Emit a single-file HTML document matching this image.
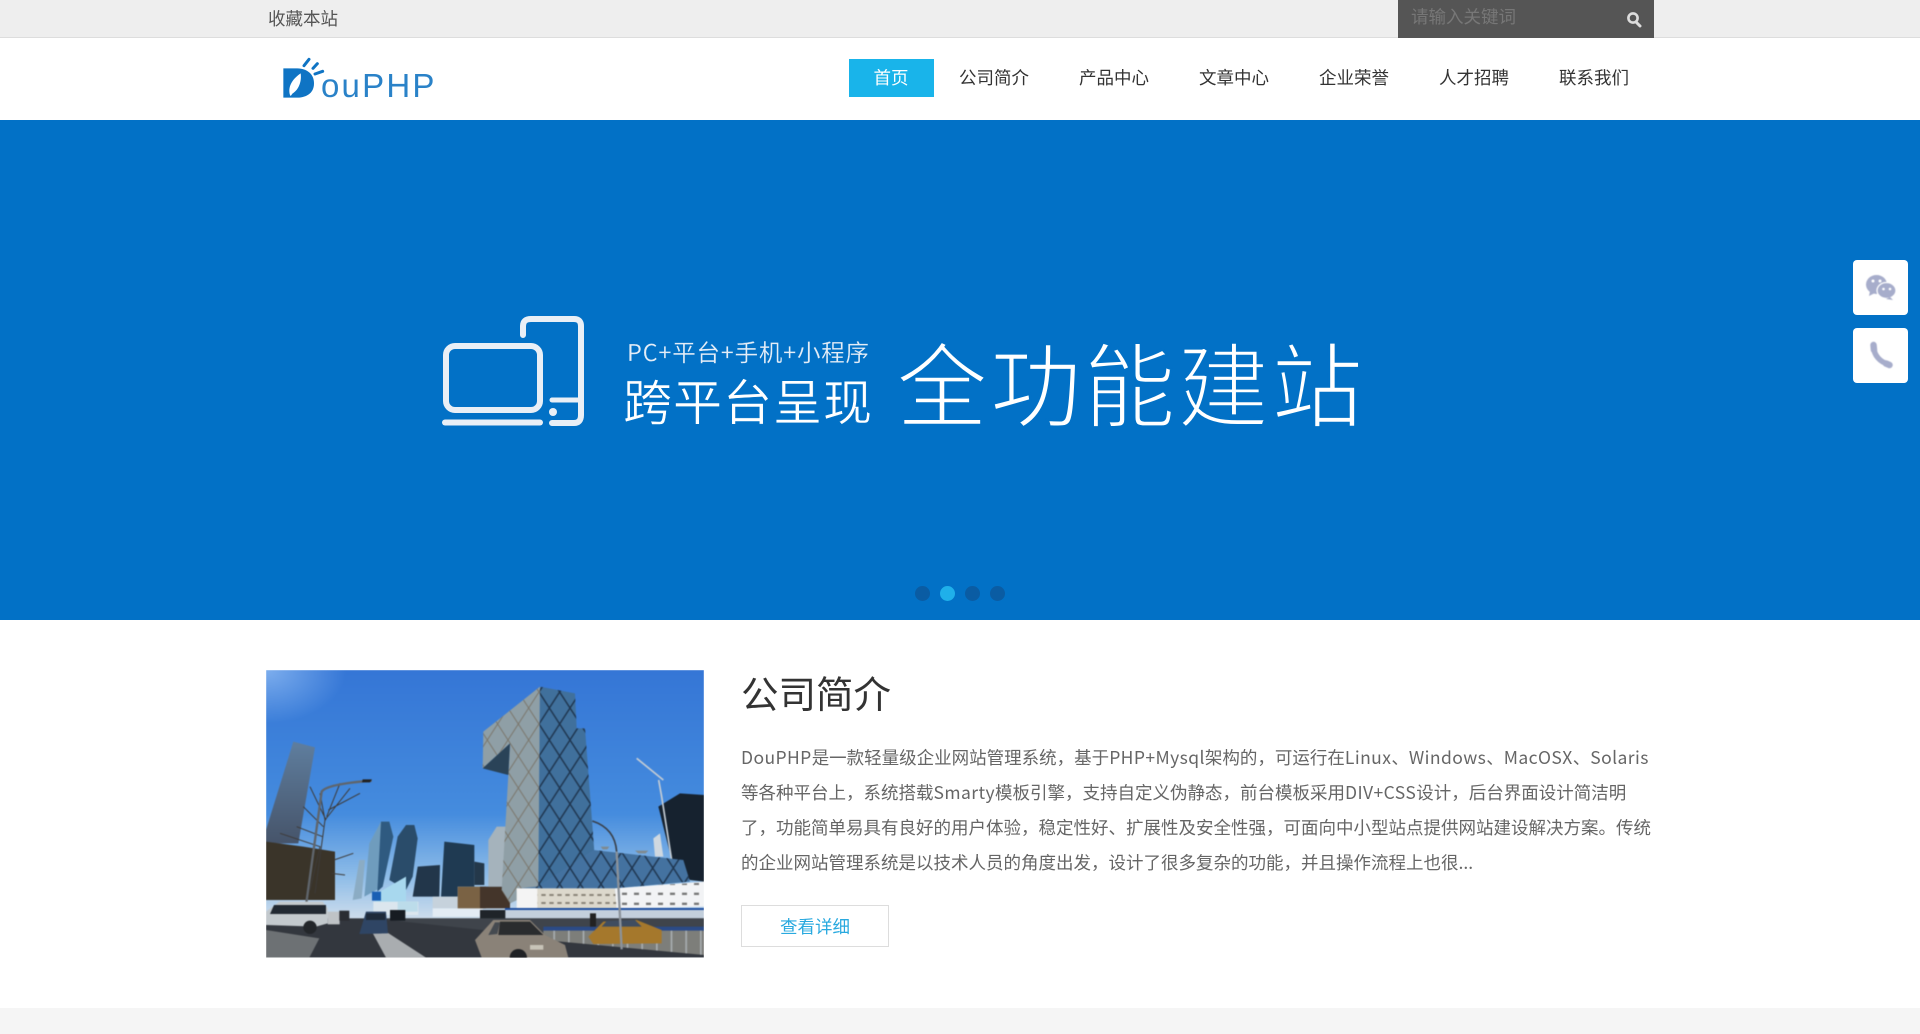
<!DOCTYPE html>
<html lang="zh-CN"><head><meta charset="utf-8"><title>DouPHP</title>
<style>
html,body{margin:0;padding:0;width:1920px;height:1034px;overflow:hidden;background:#fff;font-family:"Noto Sans CJK SC","Liberation Sans",sans-serif}
.a{position:absolute;white-space:nowrap}
#top{left:0;top:0;width:1920px;height:37px;background:#eee;border-bottom:1px solid #ddd}
.nav{top:59px;height:38px;line-height:38px;font-size:17.5px;color:#333;text-align:center;width:120px}
.l{left:741px;font-size:17.5px;line-height:35px;height:35px;color:#666}
.l b{font-weight:400;letter-spacing:.42px}
</style></head><body>
<div class="a" id="top"></div>
<div class="a" style="left:268px;top:0;line-height:37px;font-size:17.5px;color:#555">收藏本站</div>
<div class="a" style="left:1398px;top:0;width:256px;height:38px;background:#555"></div>
<div class="a" style="left:1411px;top:0;line-height:34px;font-size:17.5px;color:#777">请输入关键词</div>
<svg class="a" style="left:1626px;top:10px" width="16" height="18" viewBox="0 0 16 18"><circle cx="7" cy="8" r="4.6" fill="none" stroke="#ddd" stroke-width="2.6"/><path d="M10 12l4 4" stroke="#ddd" stroke-width="3" stroke-linecap="round"/></svg>

<svg class="a" style="left:240px;top:40px" width="220" height="70" viewBox="0 120 660 210">
<path fill="#0f74c4" d="M130 205H172C204 206 222 224 222 250C222 276 204 292 172 293H130Z"/>
<path fill="#fff" d="M150 285C143 262 155 238 182 220C186 250 172 272 158 280L152 288Z"/>
<path stroke="#0f74c4" stroke-width="9" stroke-linecap="round" d="M192 197L207 178M219 205L232 191M225 222L248 214"/>
</svg>
<div class="a" style="left:321px;top:66px;font-family:'Liberation Sans',sans-serif;font-size:33px;line-height:40px;letter-spacing:2.2px;color:#2a82c8">ouPHP</div>

<div class="a" style="left:849px;top:59px;width:85px;height:38px;background:#19b4ea"></div>
<div class="a nav" style="left:831px;color:#fff">首页</div>
<div class="a nav" style="left:934px">公司简介</div>
<div class="a nav" style="left:1054px">产品中心</div>
<div class="a nav" style="left:1174px">文章中心</div>
<div class="a nav" style="left:1294px">企业荣誉</div>
<div class="a nav" style="left:1414px">人才招聘</div>
<div class="a nav" style="left:1534px">联系我们</div>

<div class="a" style="left:0;top:120px;width:1920px;height:500px;background:#0271c6"></div>
<svg class="a" style="left:0;top:120px" width="1920" height="500" viewBox="0 120 1920 500">
<g fill="none" stroke="#e9eff6" stroke-width="6" stroke-linecap="round" stroke-linejoin="round">
<rect x="446" y="346" width="94" height="64" rx="9"/>
<path d="M445 422.500H540" stroke-width="6"/>
<path d="M523 335V326Q523 319 531 319H574Q581 319 581 326V415Q581 423 574 423H552"/>
<path d="M552 400H580" stroke-width="5"/>
</g>
<circle cx="553" cy="412" r="4" fill="#e9eff6"/>
<g font-family="'Noto Sans CJK SC',sans-serif" fill="#fff" stroke="#0271c6">
<text x="627" y="361" font-size="23.500" fill="#e4edf7" stroke-width=".15" textLength="242" lengthAdjust="spacing">PC+平台+手机+小程序</text>
<text x="623" y="420" font-size="49" stroke-width=".5" textLength="249" lengthAdjust="spacing">跨平台呈现</text>
<text x="896" y="420" font-size="92" stroke-width="2.600" textLength="467" lengthAdjust="spacing">全功能建站</text>
</g>
<g fill="#0a5ca3"><circle cx="922.500" cy="593.500" r="7.500"/><circle cx="972.500" cy="593.500" r="7.500"/><circle cx="997.500" cy="593.500" r="7.500"/></g>
<circle cx="947.500" cy="593.500" r="7.500" fill="#1fb0ea"/>
</svg>

<div class="a" style="left:1853px;top:260px;width:55px;height:55px;background:#fff;border-radius:4px"></div>
<div class="a" style="left:1853px;top:328px;width:55px;height:55px;background:#fff;border-radius:4px"></div>
<svg class="a" style="left:1853px;top:260px" width="55" height="123" viewBox="0 0 55 123">
<g style="filter:blur(.4px)">
<ellipse cx="23.500" cy="24.500" rx="10.500" ry="9.500" fill="#a7adcb"/><path d="M17 31l-1 5 6-3z" fill="#a7adcb"/>
<ellipse cx="33.500" cy="30.500" rx="9.500" ry="8" fill="#a7adcb" stroke="#fff" stroke-width="1.300"/><path d="M37 37l3 3-7-1z" fill="#a7adcb"/>
<g fill="#fff"><circle cx="20" cy="21" r="1.500"/><circle cx="27" cy="21" r="1.500"/><circle cx="30.500" cy="29" r="1.300"/><circle cx="37" cy="29" r="1.300"/></g>
<path fill="none" stroke="#a7adcb" stroke-width="5.500" stroke-linecap="round" d="M21 88C21 95 27 102 35 104"/>
<path fill="none" stroke="#a7adcb" stroke-width="6.500" stroke-linecap="round" d="M20.500 85L21 90M33 103.500L36.500 105"/>
</g>
</svg>

<svg class="a" style="left:260px;top:660px" width="450" height="300" viewBox="0 0 1350 900">
<defs>
<linearGradient id="s" x1="0" y1="0" x2="0" y2="1"><stop offset="0" stop-color="#3576d6"/><stop offset=".5" stop-color="#458cde"/><stop offset=".72" stop-color="#8fbde8"/><stop offset=".86" stop-color="#cbdcec"/></linearGradient>
<radialGradient id="g" cx="0" cy="0" r="1"><stop offset="0" stop-color="#9cc6f8" stop-opacity=".7"/><stop offset="1" stop-color="#9cc6f8" stop-opacity="0"/></radialGradient>
<linearGradient id="t" x1="0" y1="0" x2="0" y2="1"><stop offset="0" stop-color="#5f7e9e"/><stop offset="1" stop-color="#46546a"/></linearGradient>
<pattern id="d" width="62" height="96" patternUnits="userSpaceOnUse"><path d="M0 48L31 0L62 48L31 96Z" fill="none" stroke="#1f3650" stroke-width="4.500"/></pattern>
<pattern id="e" width="62" height="96" patternUnits="userSpaceOnUse"><path d="M0 48L31 0L62 48L31 96Z" fill="none" stroke="#7a756a" stroke-width="3"/></pattern>
<pattern id="w" width="24" height="24" patternUnits="userSpaceOnUse"><rect x="4" y="6" width="13" height="6" fill="#8a8478"/></pattern>
<pattern id="x" width="36" height="30" patternUnits="userSpaceOnUse"><rect x="6" y="8" width="15" height="7" fill="#777"/></pattern>
<pattern id="f" width="44" height="60" patternUnits="userSpaceOnUse"><rect width="5" height="60" fill="#a8adb0"/></pattern>
<clipPath id="c"><rect x="18" y="30" width="1314" height="863"/></clipPath>
</defs>
<g clip-path="url(#c)"><g style="filter:blur(1.200px)">
<rect x="18" y="30" width="1314" height="863" fill="url(#s)"/>
<rect x="18" y="30" width="240" height="160" fill="url(#g)"/>
<path d="M100 245L165 262L115 550H18V510Z" fill="url(#t)"/>
<path d="M18 545L130 560L225 575V720H18Z" fill="#3a3429"/>
<g stroke="#3d3a38" fill="none" stroke-width="3"><path d="M165 700L195 480L180 400M195 480L270 385M190 500L130 440M188 530L110 500M200 470L240 370M205 450L300 400M150 690L180 560L60 520M222 600L280 580M215 640L255 645M198 480L150 380"/></g>
<path d="M125 830L185 395Q200 372 335 362" fill="none" stroke="#5f656c" stroke-width="7"/>
<path d="M308 358h28l-6 9h-24z" fill="#222"/>
<path d="M278 720L298 600L315 600L305 715Z" fill="#8bacc4"/>
<path d="M313 710L328 550L363 485L388 485L400 530L368 680Z" fill="#6f9cbd"/><path d="M363 485L388 485L400 530L368 680L352 695Z" fill="#2f5a80"/>
<path d="M388 660L413 530L438 495L463 495L473 535L458 650L438 690Z" fill="#2a4c6a"/>
<path d="M473 620L540 615L538 710L458 710Z" fill="#22364a"/>
<path d="M543 710L553 545L643 555V680H593V710Z" fill="#1f3a52"/>
<path d="M643 605L673 610V675H643Z" fill="#24384a"/>
<path d="M343 705L438 650V725L348 735Z" fill="#a8d8ee"/>
<rect x="336" y="695" width="27" height="27" fill="#1a5fb4"/>
<rect x="340" y="725" width="135" height="40" fill="#dbe6ee"/><rect x="413" y="725" width="60" height="30" fill="#bcdcea"/>
<rect x="518" y="710" width="75" height="35" fill="#c6d2dc"/><rect x="518" y="745" width="150" height="25" fill="#e3ecf4"/>
<rect x="593" y="680" width="85" height="65" fill="#7a6244"/><rect x="660" y="680" width="90" height="65" fill="#44352a"/>
<path d="M685 540L710 500L738 500L730 680H685Z" fill="#a5b3bc"/>
<path d="M1195 440L1260 400L1332 405V665L1290 660L1235 600Z" fill="#16222f"/>
<path d="M1130 295L1210 360M1196 360L1205 410L1235 600" fill="none" stroke="#c4ccd4" stroke-width="5"/>
<path d="M1180 535L1200 520L1210 590H1185Z" fill="#cfd8e0"/>
<path d="M840 80L670 215L668 325L750 250L745 345L725 690L750 730L835 690Z" fill="#8f9fa6"/>
<path d="M840 80L670 215L668 325L750 250L745 345L725 690L750 730L835 690Z" fill="url(#e)"/>
<path d="M668 325L750 250L745 345Z" fill="#2a4358"/>
<path d="M840 80L945 100L950 205L975 205L1003 575L835 685Z" fill="#40709c"/>
<path d="M840 80L945 100L950 205L975 205L1003 575L835 685Z" fill="url(#d)"/>
<path d="M832 680L1000 570L1270 600L1290 665L1065 685H770Z" fill="#4472a0"/>
<path d="M832 680L1000 570L1270 600L1290 665L1065 685H770Z" fill="url(#d)"/>
<path d="M1022 560h26l-6 8h-14zM1125 572h40l-8 8h-22z" fill="#7f8a90"/>
<path d="M770 685H1065L1070 745H775Z" fill="#dcd8cc"/><path d="M832 685H1065L1070 745H832Z" fill="url(#w)"/><rect x="770" y="685" width="62" height="60" fill="#f4f4f4"/>
<path d="M1065 685L1332 665V740L1070 745Z" fill="#f2f3f5"/><path d="M1080 680L1332 668V735L1080 740Z" fill="url(#x)"/>
<rect x="735" y="746" width="597" height="60" fill="#c3cfdc"/><rect x="735" y="744" width="597" height="6" fill="#1f4fa0"/>
<rect x="660" y="750" width="76" height="30" fill="#1f2429"/>
<rect x="18" y="775" width="1314" height="118" fill="#33373e"/>
<path d="M384 780L1332 880V775H384Z" fill="#3f444b"/>
<rect x="850" y="800" width="482" height="14" fill="#2b4a86"/>
<path d="M850 812H1332V885L850 840Z" fill="#7d7e7a"/>
<path d="M850 812H1332V885L850 840Z" fill="url(#f)"/>
<path d="M990 760h18v40h-18z" fill="#222"/>
<path d="M985 830L1030 785L1130 780L1205 810V850L1000 852Z" fill="#a5782c"/><path d="M1040 783L1125 780L1145 800H1025Z" fill="#3f4d60"/>
<path d="M997 483Q1065 505 1070 575" fill="none" stroke="#39404a" stroke-width="5"/><path d="M1070 575L1085 868" stroke="#8b929a" stroke-width="7"/>
<path d="M18 810L178 835L148 893H18Z" fill="#6d7174"/>
<path d="M333 810L363 805L498 893H378Z" fill="#a9adb0"/>
<path d="M18 755L58 725H188L203 745V790L168 800L18 795Z" fill="#c3c9cd"/><path d="M42 735H198V762H30Z" fill="#222932"/><circle cx="150" cy="802" r="20" fill="#23262a"/>
<rect x="203" y="755" width="36" height="38" fill="#bfc3c6"/><rect x="238" y="752" width="30" height="30" fill="#2a2d32"/>
<path d="M298 822L318 755H378L384 820Z" fill="#2f4564"/><rect x="318" y="760" width="58" height="20" fill="#1e2a3a"/>
<rect x="390" y="750" width="46" height="32" fill="#171c22"/>
<path d="M645 840L700 780H810L855 825L915 855L925 893H665Z" fill="#8a8278"/><path d="M720 785H810L850 825H715Z" fill="#2a2c2e"/><path d="M685 825L705 787H720L712 822Z" fill="#454a50"/><circle cx="775" cy="893" r="26" fill="#202225"/><path d="M810 855h40v14h-40z" fill="#c8c4b8"/>
</g></g></svg>

<div class="a" style="left:741px;top:667px;font-size:37.500px;line-height:50px;color:#333">公司简介</div>
<div class="a l" style="top:740px"><b>DouPHP</b>是一款轻量级企业网站管理系统，基于<b>PHP+Mysql</b>架构的，可运行在<b>Linux</b>、<b>Windows</b>、<b>MacOSX</b>、<b>Solaris</b></div>
<div class="a l" style="top:775px">等各种平台上，系统搭载<b>Smarty</b>模板引擎，支持自定义伪静态，前台模板采用<b>DIV+CSS</b>设计，后台界面设计简洁明</div>
<div class="a l" style="top:810px">了，功能简单易具有良好的用户体验，稳定性好、扩展性及安全性强，可面向中小型站点提供网站建设解决方案。传统</div>
<div class="a l" style="top:845px">的企业网站管理系统是以技术人员的角度出发，设计了很多复杂的功能，并且操作流程上也很...</div>
<div class="a" style="left:741px;top:905px;width:146px;height:40px;border:1px solid #ddd;text-align:center;line-height:41px;font-size:17.500px;color:#29a9df">查看详细</div>
<div class="a" style="left:0;top:1008px;width:1920px;height:26px;background:#f5f5f5"></div>
</body></html>
